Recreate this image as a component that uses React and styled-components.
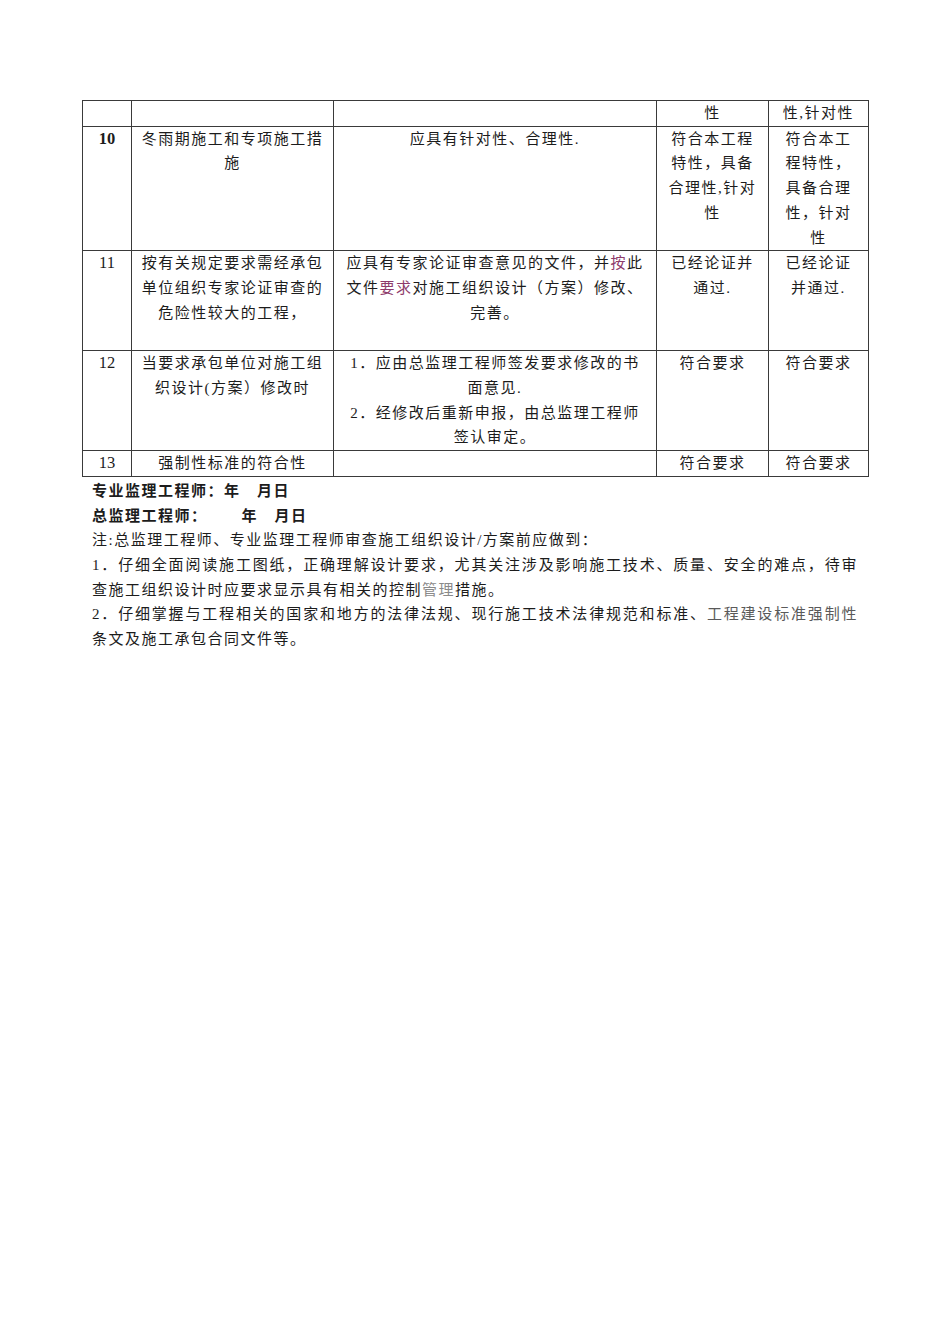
import styled, { createGlobalStyle } from "styled-components";

const GlobalStyle = createGlobalStyle`
  html, body {
    margin: 0;
    padding: 0;
    background: #ffffff;
  }
`;

const Page = styled.div`
  width: 950px;
  min-height: 1344px;
  box-sizing: border-box;
  padding: 100px 82px 0 82px;
  font-family: "Liberation Serif", "Noto Sans CJK SC", serif;
  font-size: 15px;
  letter-spacing: 1.5px;
  line-height: 24.7px;
  color: #1c1c1c;
`;

const Table = styled.table`
  width: 786px;
  border-collapse: collapse;
  table-layout: fixed;
`;

const Cell = styled.td`
  border: 1px solid #3a3a3a;
  height: ${(p) => p.$h - 1}px;
  padding: 0 8px;
  vertical-align: top;
  text-align: center;
  box-sizing: border-box;
`;

const NoCell = styled(Cell)`
  padding: 0;
  letter-spacing: 0;
  font-size: 16.5px;
  font-weight: ${(p) => (p.$bold ? 700 : 400)};
`;

const Line = styled.div`
  white-space: nowrap;
`;

const Mark = styled.span`
  color: #8e3b6b;
`;

const Notes = styled.div`
  padding: 2px 10px 0 10px;
  display: flex;
  flex-direction: column;
`;

const Sign = styled.div`
  font-weight: 700;
  white-space: pre;
`;

const Gap = styled.span`
  display: inline-block;
  width: ${(p) => p.$w}px;
`;

const Text = styled.div`
  text-align: justify;
  text-align-last: ${(p) => (p.$fill ? "justify" : "left")};
`;

const Soft = styled.span`
  color: #8a8a8a;
`;

const Dim = styled.span`
  color: #5a5a5a;
`;

const rows = [
  { no: "", item: [], req: [], a: ["性"], b: ["性,针对性"], h: 25 },
  {
    no: "10",
    bold: true,
    item: ["冬雨期施工和专项施工措", "施"],
    req: [["应具有针对性、合理性."]],
    a: ["符合本工程", "特性，具备", "合理性,针对", "性"],
    b: ["符合本工", "程特性，", "具备合理", "性，针对", "性"],
    h: 125,
  },
  {
    no: "11",
    item: ["按有关规定要求需经承包", "单位组织专家论证审查的", "危险性较大的工程，"],
    req: [
      [
        <>应具有专家论证审查意见的文件，并<Mark>按</Mark>此</>,
        <>文件<Mark>要求</Mark>对施工组织设计（方案）修改、</>,
        "完善。",
      ],
    ],
    a: ["已经论证并", "通过."],
    b: ["已经论证", "并通过."],
    h: 101,
  },
  {
    no: "12",
    item: ["当要求承包单位对施工组", "织设计(方案）修改时"],
    req: [
      ["1．应由总监理工程师签发要求修改的书", "面意见."],
      ["2．经修改后重新申报，由总监理工程师", "签认审定。"],
    ],
    a: ["符合要求"],
    b: ["符合要求"],
    h: 101,
  },
  {
    no: "13",
    item: ["强制性标准的符合性"],
    req: [],
    a: ["符合要求"],
    b: ["符合要求"],
    h: 24,
  },
];

function Lines({ lines }) {
  return lines.map((l, i) => <Line key={i}>{l}</Line>);
}

export default function App() {
  return (
    <Page>
      <GlobalStyle />
      <Table>
        <colgroup>
          <col style={{ width: 49 }} />
          <col style={{ width: 202 }} />
          <col style={{ width: 323 }} />
          <col style={{ width: 112 }} />
          <col style={{ width: 100 }} />
        </colgroup>
        <tbody>
          {rows.map((r, i) => (
            <tr key={i}>
              <NoCell $h={r.h} $bold={r.bold}>{r.no}</NoCell>
              <Cell $h={r.h}><Lines lines={r.item} /></Cell>
              <Cell $h={r.h}>
                {r.req.map((p, j) => (
                  <Lines key={j} lines={p} />
                ))}
              </Cell>
              <Cell $h={r.h}><Lines lines={r.a} /></Cell>
              <Cell $h={r.h}><Lines lines={r.b} /></Cell>
            </tr>
          ))}
        </tbody>
      </Table>
      <Notes>
        <Sign>专业监理工程师：年　月日</Sign>
        <Sign>总监理工程师：<Gap $w={34} />年　月日</Sign>
        <Text>注:总监理工程师、专业监理工程师审查施工组织设计/方案前应做到：</Text>
        <Text $fill>1．仔细全面阅读施工图纸，正确理解设计要求，尤其关注涉及影响施工技术、质量、安全的难点，待审</Text>
        <Text>查施工组织设计时应要求显示具有相关的控制<Soft>管理</Soft>措施。</Text>
        <Text $fill>2．仔细掌握与工程相关的国家和地方的法律法规、现行施工技术法律规范和标准、<Dim>工程建设标准强制性</Dim></Text>
        <Text>条文及施工承包合同文件等。</Text>
      </Notes>
    </Page>
  );
}
